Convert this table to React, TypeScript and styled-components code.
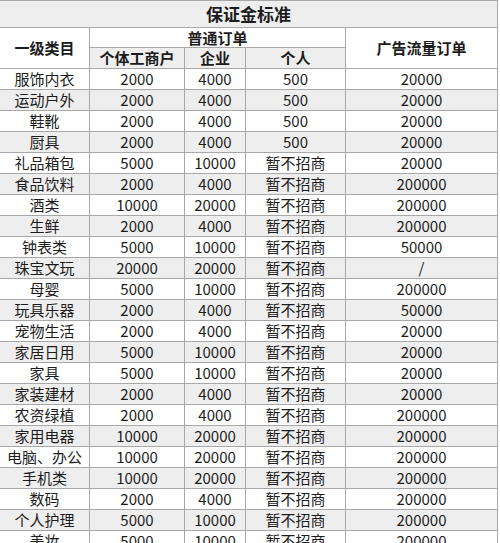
import styled, { createGlobalStyle } from 'styled-components';

const GlobalStyle = createGlobalStyle`
  body {
    margin: 0;
    background: #ffffff;
    font-family: "Noto Sans CJK SC", "Noto Sans", sans-serif;
  }
`;

const Table = styled.table`
  width: 498px;
  table-layout: fixed;
  border-collapse: separate;
  border-spacing: 0;
  border-top: 1px solid #a8a8a8;
  color: #1c1c1c;
  font-size: 15px;
`;

const Cell = styled.td<{ $bold?: boolean; $shade?: boolean; $h?: number }>`
  box-sizing: border-box;
  height: ${({ $h }) => $h ?? 21}px;
  padding: 0;
  border-right: 1px solid #a8a8a8;
  border-bottom: 1px solid #a8a8a8;
  background: ${({ $shade }) => ($shade ? '#eeeeee' : '#ffffff')};
  text-align: center;
  vertical-align: middle;
  line-height: 18px;
  font-weight: ${({ $bold }) => ($bold ? 700 : 400)};
  white-space: nowrap;
  overflow: hidden;
`;

const Title = styled(Cell)`
  font-size: 17px;
`;

const widths = [90, 95, 61, 100, 152];

type Row = [string, string, string, string, string];

const rows: Row[] = [
  ['服饰内衣', '2000', '4000', '500', '20000'],
  ['运动户外', '2000', '4000', '500', '20000'],
  ['鞋靴', '2000', '4000', '500', '20000'],
  ['厨具', '2000', '4000', '500', '20000'],
  ['礼品箱包', '5000', '10000', '暂不招商', '20000'],
  ['食品饮料', '2000', '4000', '暂不招商', '200000'],
  ['酒类', '10000', '20000', '暂不招商', '200000'],
  ['生鲜', '2000', '4000', '暂不招商', '200000'],
  ['钟表类', '5000', '10000', '暂不招商', '50000'],
  ['珠宝文玩', '20000', '20000', '暂不招商', '/'],
  ['母婴', '5000', '10000', '暂不招商', '200000'],
  ['玩具乐器', '2000', '4000', '暂不招商', '50000'],
  ['宠物生活', '2000', '4000', '暂不招商', '20000'],
  ['家居日用', '5000', '10000', '暂不招商', '20000'],
  ['家具', '5000', '10000', '暂不招商', '20000'],
  ['家装建材', '2000', '4000', '暂不招商', '20000'],
  ['农资绿植', '2000', '4000', '暂不招商', '200000'],
  ['家用电器', '10000', '20000', '暂不招商', '200000'],
  ['电脑、办公', '10000', '20000', '暂不招商', '200000'],
  ['手机类', '10000', '20000', '暂不招商', '200000'],
  ['数码', '2000', '4000', '暂不招商', '200000'],
  ['个人护理', '5000', '10000', '暂不招商', '200000'],
  ['美妆', '5000', '10000', '暂不招商', '200000'],
];

export default function App() {
  return (
    <>
      <GlobalStyle />
      <Table>
        <colgroup>
          {widths.map((w, i) => (
            <col key={i} style={{ width: w }} />
          ))}
        </colgroup>
        <thead>
          <tr>
            <Title as="th" colSpan={5} $bold $shade $h={27}>
              保证金标准
            </Title>
          </tr>
          <tr>
            <Cell as="th" rowSpan={2} $bold>
              一级类目
            </Cell>
            <Cell as="th" colSpan={3} $bold $h={20}>
              普通订单
            </Cell>
            <Cell as="th" rowSpan={2} $bold>
              广告流量订单
            </Cell>
          </tr>
          <tr>
            <Cell as="th" $bold $shade>个体工商户</Cell>
            <Cell as="th" $bold $shade>企业</Cell>
            <Cell as="th" $bold $shade>个人</Cell>
          </tr>
        </thead>
        <tbody>
          {rows.map((r, i) => (
            <tr key={r[0]}>
              {r.map((v, j) => (
                <Cell key={j} $shade={i % 2 === 1}>
                  {v}
                </Cell>
              ))}
            </tr>
          ))}
        </tbody>
      </Table>
    </>
  );
}
